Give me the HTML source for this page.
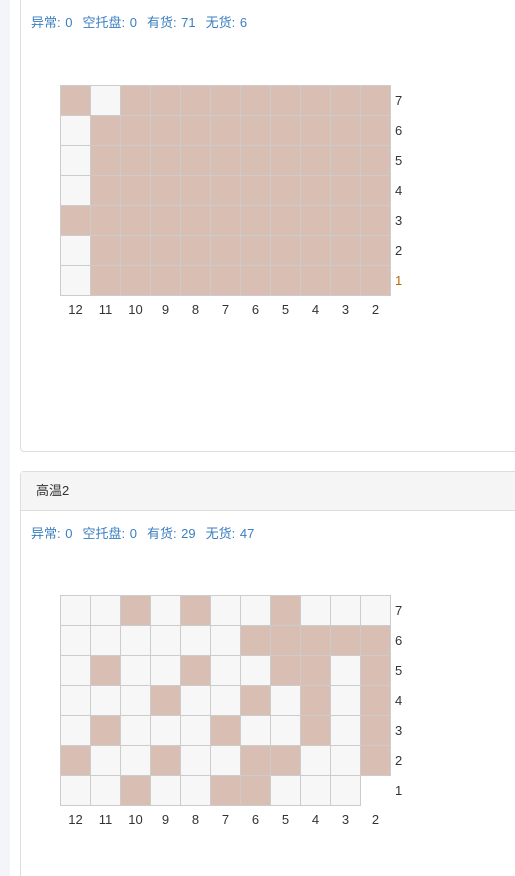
<!DOCTYPE html>
<html><head><meta charset="utf-8"><style>
html,body{margin:0;width:515px;height:876px;overflow:hidden;}
body{background:#fff;position:relative;font-family:"Liberation Sans","Noto Sans CJK SC",sans-serif;}
.strip{position:absolute;left:0;top:0;width:10px;height:876px;background:#f3f5f9;}
.panel{position:absolute;left:20px;width:520px;border:1px solid #ddd;border-radius:4px;background:#fff;}
.hd{height:38px;background:#f5f5f5;border-bottom:1px solid #ddd;font-size:13px;line-height:38px;padding-left:15px;color:#333;}
.st{position:absolute;left:31px;font-size:13px;color:#3a7fc0;word-spacing:1px;}
.st span{margin-right:10px}
.c{position:absolute;width:29px;height:29px;border:1px solid #ccc;box-sizing:content-box;}
.t{background:#d9bfb3}.l{background:#f7f7f7}
.lb{position:absolute;font-size:13px;color:#333;}
</style></head><body>
<div class="strip"></div>
<div class="panel" style="top:-10px;height:460px"></div>
<div class="st" style="top:12px"><span>异常: 0</span><span>空托盘: 0</span><span>有货: 71</span><span>无货: 6</span></div>
<div class="panel" style="top:471px;height:440px"><div class="hd">高温2</div></div>
<div class="st" style="top:523px"><span>异常: 0</span><span>空托盘: 0</span><span>有货: 29</span><span>无货: 47</span></div>
<div id="g"></div>
<script>
var g1=["10111111111","01111111111","01111111111","01111111111","11111111111","01111111111","01111111111"];
var g2=["00101001000","00000011111","01001001101","00010010101","01000100101","10010011001","0010011000x"];
var h="";
function grid(d,top,orange){
 for(var r=0;r<7;r++){for(var c=0;c<11;c++){var v=d[r][c];if(v=="x")continue;
  h+='<div class="c '+(v=="1"?"t":"l")+'" style="left:'+(60+30*c)+'px;top:'+(top+30*r)+'px"></div>';}
  h+='<div class="lb" style="left:395px;top:'+(top+30*r+8)+'px;'+(r==6&&orange?'color:#b86a00':'')+'">'+(7-r)+'</div>';}
 var n=[12,11,10,9,8,7,6,5,4,3,2];
 for(var c=0;c<11;c++)h+='<div class="lb" style="left:'+(60+30*c)+'px;width:31px;text-align:center;top:'+(top+217)+'px">'+n[c]+'</div>';
}
grid(g1,85,true);grid(g2,595,false);
document.getElementById("g").innerHTML=h;
</script>
</body></html>
